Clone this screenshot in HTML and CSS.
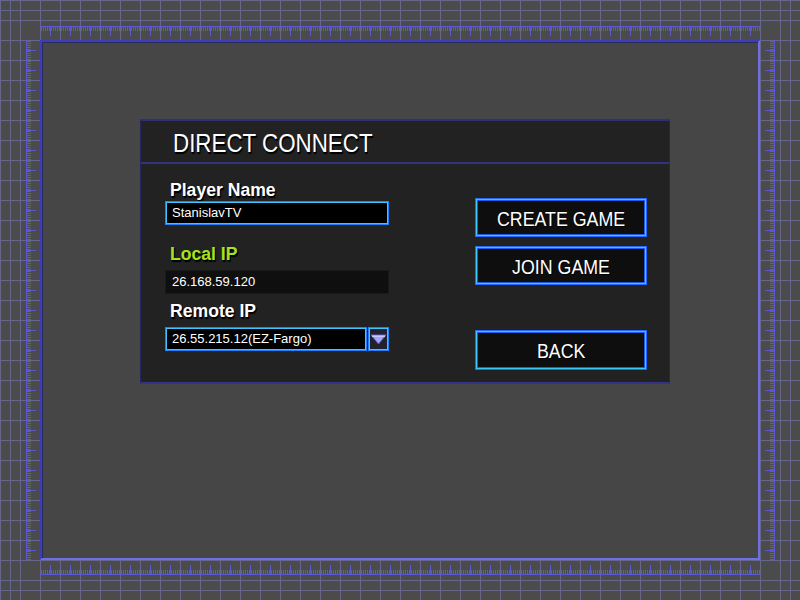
FILE: index.html
```html
<!DOCTYPE html>
<html>
<head>
<meta charset="utf-8">
<link rel="stylesheet" href="styles.css">
</head>
<body>
<div class="stage">
  <div class="frame">
    <span class="ruler ruler-top"></span>
    <span class="ruler ruler-left"></span>
    <span class="ruler ruler-right"></span>
    <span class="ruler ruler-bottom"></span>
    <div class="dialog">
      <div class="dialog-title"><span class="title-text">DIRECT CONNECT</span></div>
      <div class="dialog-body">
        <div class="col-left">
          <div class="label label-first">Player Name</div>
          <div class="field field-edit">StanislavTV</div>
          <div class="label label-local">Local IP</div>
          <div class="field field-static">26.168.59.120</div>
          <div class="label label-remote">Remote IP</div>
          <div class="select">
            <div class="field field-edit select-value">26.55.215.12(EZ-Fargo)</div>
            <div class="select-btn">
              <svg width="17" height="11" viewBox="0 0 17 11"><polygon points="1,1 16,1 8.5,10" fill="#a2a2ff" stroke="#5c5cc8" stroke-width="1"/><rect x="2" y="1.5" width="13" height="1.5" fill="#c8c8ff"/></svg>
            </div>
          </div>
        </div>
        <div class="col-right">
          <div class="btn btn-create"><span class="btn-text">CREATE GAME</span></div>
          <div class="btn btn-join"><span class="btn-text">JOIN GAME</span></div>
          <div class="btn btn-back"><span class="btn-text">BACK</span></div>
        </div>
      </div>
    </div>
  </div>
</div>
</body>
</html>
```

FILE: styles.css
```css
html, body {
  margin: 0;
  padding: 0;
}
body {
  width: 800px;
  height: 600px;
  overflow: hidden;
  font-family: "Liberation Sans", Arial, sans-serif;
  background-color: #4b4b4b;
  background-image:
    linear-gradient(90deg, #66668c 1px, transparent 1px),
    linear-gradient(#66668c 1px, transparent 1px),
    linear-gradient(90deg, #66668c 1px, transparent 1px),
    linear-gradient(#66668c 1px, transparent 1px),
    linear-gradient(90deg, #66668c 1px, transparent 1px),
    linear-gradient(#66668c 1px, transparent 1px);
  background-size: 20px 20px, 20px 20px, 1px 600px, 800px 1px, 1px 600px, 800px 1px;
  background-position: 0 0, 0 0, 10px 0, 0 10px, 790px 0, 0 590px;
  background-repeat: repeat, repeat, no-repeat, no-repeat, no-repeat, no-repeat;
}
.stage {
  padding: 40px;
}
.frame {
  position: relative;
  box-sizing: border-box;
  width: 720px;
  height: 520px;
  background: #464646;
  border: 2px solid;
  border-color: #3c3cbc #7070e6 #7070e6 #3c3cbc;
  box-shadow: inset 1px 1px 0 #2a2a58;
  padding: 77px 0 0 98px;
}
.ruler {
  position: absolute;
  display: block;
  --rc: #5858d2;
}
.ruler-top {
  left: -2px;
  top: -16px;
  width: 720px;
  height: 10px;
  background-image:
    linear-gradient(var(--rc), var(--rc)),
    repeating-linear-gradient(90deg, transparent 0 1px, var(--rc) 1px 2px),
    repeating-linear-gradient(90deg, transparent 0 10px, var(--rc) 10px 11px, transparent 11px 20px);
  background-size: 100% 1px, 100% 5px, 100% 10px;
  background-position: 0 0, 0 0, 0 0;
  background-repeat: no-repeat;
}
.ruler-bottom {
  left: -2px;
  top: 523px;
  width: 720px;
  height: 10px;
  background-image:
    linear-gradient(var(--rc), var(--rc)),
    repeating-linear-gradient(90deg, transparent 0 1px, var(--rc) 1px 2px),
    repeating-linear-gradient(90deg, transparent 0 10px, var(--rc) 10px 11px, transparent 11px 20px);
  background-size: 100% 1px, 100% 5px, 100% 10px;
  background-position: 0 100%, 0 100%, 0 100%;
  background-repeat: no-repeat;
}
.ruler-left {
  left: -16px;
  top: -2px;
  width: 10px;
  height: 520px;
  background-image:
    linear-gradient(var(--rc), var(--rc)),
    repeating-linear-gradient(180deg, transparent 0 1px, var(--rc) 1px 2px),
    repeating-linear-gradient(180deg, transparent 0 10px, var(--rc) 10px 11px, transparent 11px 20px);
  background-size: 1px 100%, 5px 100%, 10px 100%;
  background-position: 0 0, 0 0, 0 0;
  background-repeat: no-repeat;
}
.ruler-right {
  left: 723px;
  top: -2px;
  width: 10px;
  height: 520px;
  background-image:
    linear-gradient(var(--rc), var(--rc)),
    repeating-linear-gradient(180deg, transparent 0 1px, var(--rc) 1px 2px),
    repeating-linear-gradient(180deg, transparent 0 10px, var(--rc) 10px 11px, transparent 11px 20px);
  background-size: 1px 100%, 5px 100%, 10px 100%;
  background-position: 100% 0, 100% 0, 100% 0;
  background-repeat: no-repeat;
}
.dialog {
  box-sizing: border-box;
  width: 530px;
  height: 265px;
  background: #222222;
  border-top: 2px solid #2e2e7a;
  border-bottom: 2px solid #33338a;
  border-left: 1px solid #26265e;
  border-right: 1px solid #26265e;
}
.dialog-title {
  height: 38px;
  padding-top: 3px;
  line-height: 38px;
  border-bottom: 2px solid #34347e;
  padding-left: 32px;
  color: #ffffff;
  font-size: 26px;
  white-space: nowrap;
}
.title-text {
  display: inline-block;
  transform: scaleX(0.86);
  transform-origin: 0 50%;
  text-shadow: 1px 1px 0 #000, 1px 2px 1px #000;
}
.dialog-body {
  display: flex;
  gap: 86px;
  padding-left: 24px;
}
.col-left {
  width: 224px;
  display: flex;
  flex-direction: column;
}
.label {
  font-size: 17.6px;
  font-weight: bold;
  line-height: 20px;
  height: 20px;
  color: #ffffff;
  padding-left: 5px;
  text-shadow: 1px 1px 0 #000, 1px 2px 1px #000;
  white-space: nowrap;
}
.label-first { margin-top: 16px; margin-bottom: 1px; }
.label-local { margin-top: 19px; margin-bottom: 6px; color: #a6e21e; }
.label-remote { margin-top: 7px; margin-bottom: 6px; }
.field {
  box-sizing: border-box;
  height: 24px;
  font-size: 13px;
  line-height: 20px;
  color: #ffffff;
  padding: 1px 0 0 5px;
  white-space: nowrap;
}
.field-edit {
  background: #000000;
  border: 1px solid #1f80ff;
  box-shadow: inset 0 0 0 1px #3ec4ff;
  padding-left: 6px;
}
.field-static {
  background: #0f0f0f;
  border: 1px solid #1a1a1a;
  padding-left: 6px;
}
.select {
  display: flex;
  gap: 1px;
}
.select-value {
  width: 202px;
}
.select-btn {
  box-sizing: border-box;
  width: 21px;
  height: 24px;
  background: #22222e;
  border: 1px solid #1f80ff;
  box-shadow: inset 0 0 0 1px #3ec4ff;
  display: flex;
  align-items: center;
  justify-content: center;
}
.select-btn svg {
  display: block;
  margin-top: 1px;
}
.col-right {
  width: 172px;
  display: flex;
  flex-direction: column;
}
.btn {
  box-sizing: border-box;
  height: 39px;
  background: #0e0e0e;
  border: 1px solid #2266ff;
  box-shadow: inset 0 0 0 1px #3cc8ff, inset 0 0 0 2px #1f5ce0;
  color: #ffffff;
  font-size: 20px;
  line-height: 35px;
  padding-top: 3px;
  text-align: center;
  white-space: nowrap;
}
.btn-text {
  display: inline-block;
  transform: scaleX(0.89);
  text-shadow: 1px 1px 0 #000;
}
.btn-create { margin-top: 34px; }
.btn-join { margin-top: 9px; }
.btn-back { margin-top: 45px; height: 40px; }
```
